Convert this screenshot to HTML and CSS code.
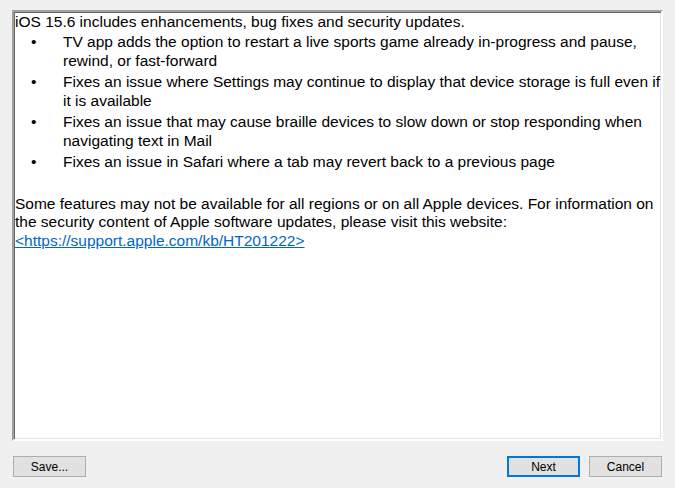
FILE: index.html
```html
<!DOCTYPE html>
<html>
<head>
<meta charset="utf-8">
<link rel="stylesheet" href="styles.css">
</head>
<body>
<div class="dialog">
  <div class="notes">
    <p class="intro">iOS 15.6 includes enhancements, bug fixes and security updates.</p>
    <ul class="items">
      <li>TV app adds the option to restart a live sports game already in-progress and pause, rewind, or fast-forward</li>
      <li>Fixes an issue where Settings may continue to display that device storage is full even if it is available</li>
      <li>Fixes an issue that may cause braille devices to slow down or stop responding when navigating text in Mail</li>
      <li>Fixes an issue in Safari where a tab may revert back to a previous page</li>
    </ul>
    <p class="footer">Some features may not be available for all regions or on all Apple devices. For information on the security content of Apple software updates, please visit this website: <a href="#" class="link">&lt;https://support.apple.com/kb/HT201222&gt;</a></p>
  </div>
  <div class="buttons">
    <button class="btn">Save...</button>
    <div class="spacer"></div>
    <button class="btn btn-default">Next</button>
    <button class="btn">Cancel</button>
  </div>
</div>
</body>
</html>
```
FILE: styles.css
```css
html, body {
  margin: 0;
  padding: 0;
  background: #f0f0f0;
}
.dialog {
  width: 675px;
  height: 488px;
  box-sizing: border-box;
  padding: 10px 13px 0 12px;
  display: flex;
  flex-direction: column;
}
.notes {
  width: 651px;
  height: 431px;
  box-sizing: border-box;
  background: #fff;
  border-style: solid;
  border-width: 2px;
  border-color: #a0a0a0 #ffffff #ffffff #a0a0a0;
  box-shadow: inset 1px 1px 0 #696969, inset -1px -1px 0 #e3e3e3;
  padding: 0 0 0 1px;
  font-family: "Liberation Sans", Arial, sans-serif;
  font-size: 15.5px;
  line-height: 18.4px;
  color: #000;
  overflow: hidden;
}
.intro {
  margin: 0;
  padding-top: 1px;
  padding-right: 3px;
}
.items {
  list-style: none;
  margin: 2px 0 0 0;
  padding: 0 0 0 48px;
}
.items li {
  position: relative;
  margin-bottom: 3.2px;
}
.items li::before {
  content: "•";
  position: absolute;
  left: -32px;
  top: 0;
}
.footer {
  margin: 23px 0 0 0;
  padding-right: 3px;
}
.link {
  color: #0066cc;
  text-decoration: underline;
}
.buttons {
  display: flex;
  align-items: center;
  margin-top: 15px;
  padding-left: 1px;
}
.spacer {
  flex: 1;
}
.btn {
  width: 73px;
  height: 21px;
  box-sizing: border-box;
  background: #e1e1e1;
  border: 1px solid #adadad;
  font-family: "Liberation Sans", Arial, sans-serif;
  font-size: 12px;
  color: #000;
  padding: 0;
  margin: 0 0 0 9px;
}
.btn:first-child {
  margin-left: 0;
}
.btn-default {
  border: 2px solid #0078d7;
}
```
